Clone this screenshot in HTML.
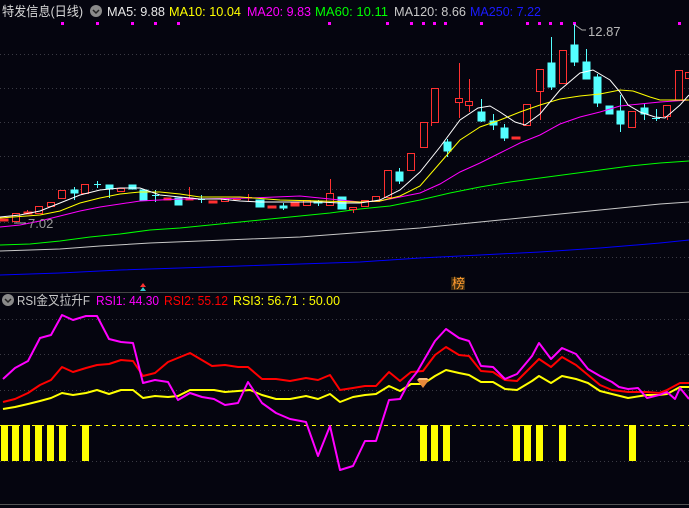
<!DOCTYPE html>
<html><head><meta charset="utf-8"><style>
html,body{margin:0;padding:0;background:#05050f;width:689px;height:508px;overflow:hidden}
svg{display:block}
text{font-family:"Liberation Sans","Noto Sans CJK SC",sans-serif;font-size:13px}
</style></head><body>
<svg width="689" height="508" viewBox="0 0 689 508" xmlns="http://www.w3.org/2000/svg">
<rect width="689" height="508" fill="#05050f"/>
<!-- header -->
<text x="2" y="16" fill="#d8d8d8" textLength="81" lengthAdjust="spacingAndGlyphs">特发信息(日线)</text>
<circle cx="96" cy="11" r="6" fill="#8a8a8a"/><path d="M93 10 L96 13 L99 10" stroke="#222" stroke-width="1.5" fill="none"/>
<text x="107" y="16" fill="#e8e8e8" textLength="58" lengthAdjust="spacingAndGlyphs">MA5: 9.88</text>
<text x="169" y="16" fill="#ffff00" textLength="72" lengthAdjust="spacingAndGlyphs">MA10: 10.04</text>
<text x="247" y="16" fill="#ff00ff" textLength="64" lengthAdjust="spacingAndGlyphs">MA20: 9.83</text>
<text x="315" y="16" fill="#00ff00" textLength="73" lengthAdjust="spacingAndGlyphs">MA60: 10.11</text>
<text x="394" y="16" fill="#c8c8c8" textLength="72" lengthAdjust="spacingAndGlyphs">MA120: 8.66</text>
<text x="470" y="16" fill="#1a1aff" textLength="71" lengthAdjust="spacingAndGlyphs">MA250: 7.22</text>
<!-- magenta dots -->
<g fill="#ff00ff">
<rect x="61" y="22" width="3" height="3"/><rect x="96" y="22" width="3" height="3"/><rect x="131" y="22" width="3" height="3"/><rect x="154" y="22" width="3" height="3"/><rect x="177" y="22" width="3" height="3"/><rect x="328" y="22" width="3" height="3"/><rect x="386" y="22" width="3" height="3"/><rect x="410" y="22" width="3" height="3"/><rect x="422" y="22" width="3" height="3"/><rect x="433" y="22" width="3" height="3"/><rect x="444" y="22" width="3" height="3"/><rect x="480" y="22" width="3" height="3"/><rect x="526" y="22" width="3" height="3"/><rect x="538" y="22" width="3" height="3"/><rect x="549" y="22" width="3" height="3"/><rect x="560" y="22" width="3" height="3"/><rect x="573" y="22" width="3" height="3"/><rect x="678" y="22" width="3" height="3"/>
</g>
<!-- grid -->
<g stroke="#3a3a44" stroke-dasharray="1 3" stroke-width="1">
<line x1="0" y1="54.5" x2="689" y2="54.5"/><line x1="0" y1="88.5" x2="689" y2="88.5"/><line x1="0" y1="122.5" x2="689" y2="122.5"/><line x1="0" y1="156.5" x2="689" y2="156.5"/><line x1="0" y1="189.5" x2="689" y2="189.5"/><line x1="0" y1="222.5" x2="689" y2="222.5"/><line x1="0" y1="257.5" x2="689" y2="257.5"/>
<line x1="0" y1="319.5" x2="689" y2="319.5"/><line x1="0" y1="354.5" x2="689" y2="354.5"/><line x1="0" y1="390.5" x2="689" y2="390.5"/><line x1="0" y1="461.5" x2="689" y2="461.5"/>
</g>
<!-- MA lines -->
<g fill="none" stroke-width="1">
<polyline stroke="#0000ff" points="0,275 60,273 120,270 180,268 240,266 300,264 360,262 420,258 480,255 540,252 600,248 660,243 689,240"/>
<polyline stroke="#c8c8c8" points="0,251 60,249 100,246 150,243 200,241 250,239 300,237 340,234 380,231 420,228 460,224 500,220 540,216 580,212 620,208 660,204 689,202"/>
<polyline stroke="#00ff00" points="0,245 30,244 60,241 90,237 120,234 150,230 180,228 210,225 240,222 270,219 300,216 330,213 360,209 390,206 420,200 450,193 480,187 510,182 540,178 570,174 600,170 630,166 660,163 689,161"/>
</g>
<!-- candles -->
<g stroke-width="1">
<g stroke="#54ffff" fill="#54ffff">
<line x1="74.5" y1="187" x2="74.5" y2="200"/><rect x="71" y="190" width="7" height="3"/>
<line x1="97.5" y1="181" x2="97.5" y2="188"/><line x1="94" y1="184.5" x2="101" y2="184.5"/>
<line x1="109.5" y1="185" x2="109.5" y2="198"/><rect x="106" y="185" width="7" height="4"/>
<rect x="129" y="185" width="7" height="4"/>
<rect x="140" y="190" width="7" height="10"/>
<line x1="155.5" y1="190" x2="155.5" y2="202"/><line x1="152" y1="195.5" x2="159" y2="195.5"/>
<rect x="175" y="198" width="7" height="7"/>
<line x1="201.5" y1="195" x2="201.5" y2="203"/><line x1="198" y1="199.5" x2="205" y2="199.5"/>
<rect x="256" y="200" width="8" height="7"/>
<line x1="283.5" y1="203" x2="283.5" y2="210"/><rect x="280" y="206" width="7" height="2"/>
<line x1="318.5" y1="200" x2="318.5" y2="206"/><rect x="314" y="201" width="8" height="2"/>
<rect x="338" y="197" width="8" height="12"/>
<line x1="399.5" y1="168" x2="399.5" y2="184"/><rect x="396" y="172" width="7" height="9"/>
<line x1="447.5" y1="139" x2="447.5" y2="157"/><rect x="444" y="142" width="7" height="9"/>
<line x1="481.5" y1="99" x2="481.5" y2="122"/><rect x="478" y="112" width="7" height="9"/>
<line x1="493.5" y1="114" x2="493.5" y2="130"/><rect x="490" y="121" width="7" height="4"/>
<line x1="504.5" y1="124" x2="504.5" y2="141"/><rect x="501" y="128" width="7" height="10"/>
<line x1="551.5" y1="37" x2="551.5" y2="90"/><rect x="548" y="63" width="7" height="24"/>
<line x1="574.5" y1="24" x2="574.5" y2="66"/><rect x="571" y="45" width="7" height="17"/>
<line x1="586.5" y1="49" x2="586.5" y2="79"/><rect x="583" y="62" width="7" height="17"/>
<line x1="597.5" y1="74" x2="597.5" y2="107"/><rect x="594" y="77" width="7" height="26"/>
<rect x="606" y="106" width="7" height="8"/>
<line x1="620.5" y1="95" x2="620.5" y2="132"/><rect x="617" y="111" width="7" height="13"/>
<line x1="644.5" y1="104" x2="644.5" y2="120"/><rect x="641" y="108" width="7" height="6"/>
<line x1="656.5" y1="109" x2="656.5" y2="121"/><line x1="652" y1="118.5" x2="660" y2="118.5"/>
</g>
<g stroke="#ff3030" fill="#ff3030">
<rect x="0" y="219" width="8" height="2"/>
<line x1="27.5" y1="210" x2="27.5" y2="214"/><rect x="24" y="212" width="8" height="2"/>
<rect x="164" y="198" width="7" height="2"/>
<line x1="189.5" y1="187" x2="189.5" y2="200"/><rect x="186" y="198" width="7" height="2"/>
<rect x="209" y="201" width="8" height="2"/>
<line x1="233" y1="199.5" x2="241" y2="199.5"/>
<line x1="248.5" y1="194" x2="248.5" y2="201"/><line x1="245" y1="197.5" x2="252" y2="197.5"/>
<rect x="268" y="206" width="8" height="2"/>
<rect x="291" y="203" width="8" height="3"/>
<line x1="330.5" y1="179" x2="330.5" y2="193"/>
<line x1="353.5" y1="209" x2="353.5" y2="213"/>
<line x1="431.5" y1="122" x2="431.5" y2="126"/>
<line x1="459.5" y1="63" x2="459.5" y2="118"/>
<line x1="469.5" y1="79" x2="469.5" y2="112"/>
<rect x="512" y="137" width="8" height="2"/>
<line x1="540.5" y1="91" x2="540.5" y2="120"/>
<line x1="667.5" y1="116" x2="667.5" y2="120"/>
</g>
<g stroke="#ff3030" fill="#05050f">
<rect x="12.5" y="213.5" width="7" height="8"/>
<rect x="35.5" y="206.5" width="7" height="7"/>
<rect x="47.5" y="202.5" width="7" height="4"/>
<rect x="58.5" y="190.5" width="7" height="8"/>
<rect x="81.5" y="184.5" width="7" height="9"/>
<rect x="117.5" y="188.5" width="7" height="3"/>
<rect x="221.5" y="198.5" width="7" height="3"/>
<rect x="303.5" y="200.5" width="7" height="5"/>
<rect x="326.5" y="193.5" width="7" height="12"/>
<rect x="349.5" y="207.5" width="7" height="2"/>
<rect x="361.5" y="200.5" width="7" height="6"/>
<rect x="372.5" y="196.5" width="7" height="5"/>
<rect x="384.5" y="170.5" width="7" height="27"/>
<rect x="407.5" y="153.5" width="7" height="17"/>
<rect x="420.5" y="122.5" width="7" height="25"/>
<rect x="431.5" y="88.5" width="7" height="34"/>
<rect x="455.5" y="98.5" width="7" height="4"/>
<rect x="465.5" y="101.5" width="7" height="4"/>
<rect x="523.5" y="104.5" width="7" height="21"/>
<rect x="536.5" y="69.5" width="7" height="22"/>
<rect x="559.5" y="50.5" width="7" height="33"/>
<rect x="628.5" y="111.5" width="7" height="16"/>
<rect x="663.5" y="105.5" width="7" height="11"/>
<rect x="675.5" y="70.5" width="7" height="30"/>
<rect x="685.5" y="72.5" width="7" height="6"/>
</g>
</g>
<g fill="none" stroke-width="1">
<polyline stroke="#ff00ff" points="0,227 20,225 40,221 60,216 80,211 100,207 120,204 140,201 160,200 180,199 200,199 250,198 300,196 340,200 360,202 380,201 400,197 420,193 440,184 460,172 480,163 500,153 520,143 540,135 560,124 580,117 600,112 620,106 640,104 660,102 689,100"/>
<polyline stroke="#ffff00" points="0,218 40,215 60,211 80,203 100,198 120,194 140,192 160,192 180,194 200,197 240,197 280,200 320,201 360,202 380,201 400,196 420,186 440,163 460,140 480,127 500,120 520,112 540,105 560,99 580,96 600,94 620,90 633,91 650,97 660,100 689,100"/>
<polyline stroke="#ffffff" points="0,217 20,215 40,211 60,203 80,195 100,190 120,188 140,188 160,195 180,197 200,199 220,199 240,201 260,202 280,202 300,202 320,202 340,203 360,203 380,200 400,190 420,172 440,147 460,120 478,108 490,106 500,112 515,122 525,125 540,114 560,90 580,73 593,70 610,80 620,92 628,105 640,112 655,117 665,118 680,105 689,95"/>
</g>
<!-- labels -->
<path d="M575 25 L582 30 L586 30" stroke="#aaa" fill="none"/>
<text x="588" y="36" fill="#b8b8b8" font-size="12">12.87</text>
<path d="M14 223 L26 223" stroke="#aaa"/>
<text x="28" y="228" fill="#999" font-size="12">7.02</text>
<path d="M140 287 L143 283 L146 287 Z" fill="#ff3030"/><path d="M140 291 L143 287 L146 291 Z" fill="#3cc"/>
<rect x="451" y="277" width="14" height="13" fill="#3a2a10"/>
<text x="452" y="288" fill="#ff9a30" font-size="11">榜</text>
<line x1="0" y1="292.5" x2="689" y2="292.5" stroke="#444"/>
<!-- RSI header -->
<circle cx="8" cy="300" r="6" fill="#8a8a8a"/><path d="M5 299 L8 302 L11 299" stroke="#222" stroke-width="1.5" fill="none"/>
<text x="17" y="305" fill="#c8c8c8" textLength="73" lengthAdjust="spacingAndGlyphs">RSI金叉拉升F</text>
<text x="96" y="305" fill="#ff00ff" textLength="63" lengthAdjust="spacingAndGlyphs">RSI1: 44.30</text>
<text x="164" y="305" fill="#ff0000" textLength="64" lengthAdjust="spacingAndGlyphs">RSI2: 55.12</text>
<text x="233" y="305" fill="#ffff00" textLength="107" lengthAdjust="spacingAndGlyphs">RSI3: 56.71 : 50.00</text>
<!-- dashed level -->
<line x1="0" y1="425.5" x2="689" y2="425.5" stroke="#ffff00" stroke-dasharray="4 4"/>
<!-- bars -->
<g fill="#ffff00">
<rect x="1" y="425" width="7" height="36"/><rect x="12" y="425" width="7" height="36"/><rect x="23" y="425" width="7" height="36"/><rect x="35" y="425" width="7" height="36"/><rect x="47" y="425" width="7" height="36"/><rect x="59" y="425" width="7" height="36"/><rect x="82" y="425" width="7" height="36"/>
<rect x="420" y="425" width="7" height="36"/><rect x="431" y="425" width="7" height="36"/><rect x="443" y="425" width="7" height="36"/><rect x="513" y="425" width="7" height="36"/><rect x="524" y="425" width="7" height="36"/><rect x="536" y="425" width="7" height="36"/><rect x="559" y="425" width="7" height="36"/><rect x="629" y="425" width="7" height="36"/>
</g>
<g fill="none" stroke-width="2" stroke-linejoin="round">
<polyline stroke="#ffff00" points="3,409 15,407 28,404 40,401 51,398 62,393 73,395 86,393 97,390 109,394 121,390 133,390 143,398 155,396 168,397 178,396 190,390 202,390 214,390 225,392 238,391 250,390 262,395 276,399 290,399 306,396 318,399 330,394 340,402 353,397 365,395 376,394 389,386 400,391 411,384 423,384 435,376 446,370 459,373 469,375 481,382 493,382 505,389 517,390 532,381 539,376 551,383 562,376 576,379 588,383 600,391 612,394 628,398 647,395 659,395 667,394 680,387 689,387"/>
<polyline stroke="#ff0000" points="3,402 15,399 28,393 40,385 51,380 62,367 73,372 86,368 97,365 109,364 121,360 133,361 143,376 155,373 168,362 190,353 212,366 225,365 238,367 248,367 262,379 276,379 290,381 306,378 318,380 330,375 340,390 353,388 365,386 376,386 389,372 400,381 411,372 423,371 435,355 446,347 459,355 469,356 481,371 493,372 505,380 517,381 532,366 539,359 551,367 562,357 576,365 588,375 600,385 612,390 628,392 647,392 659,393 667,390 680,383 689,383"/>
<polyline stroke="#ff00ff" points="3,379 15,368 28,361 40,338 51,335 62,315 73,320 86,316 97,316 109,339 121,342 133,343 143,383 155,380 168,382 178,400 190,393 202,397 214,399 225,405 238,403 248,382 262,403 276,413 290,419 306,422 318,456 330,426 340,470 353,466 365,441 376,441 389,400 400,399 409,382 417,372 435,341 446,329 459,338 469,341 481,366 493,367 505,379 517,374 532,356 539,343 551,359 562,348 576,354 588,369 600,376 612,382 619,387 628,389 638,388 647,398 659,395 667,392 675,399 680,388 689,399"/>
</g>
<path d="M417 380 L429 380 L423 388 Z" fill="#e88a3a"/><path d="M419 378 L427 378 L429 380 L417 380 Z" fill="#f6c080"/>
<line x1="0" y1="504.5" x2="689" y2="504.5" stroke="#555"/>
</svg>
</body></html>
